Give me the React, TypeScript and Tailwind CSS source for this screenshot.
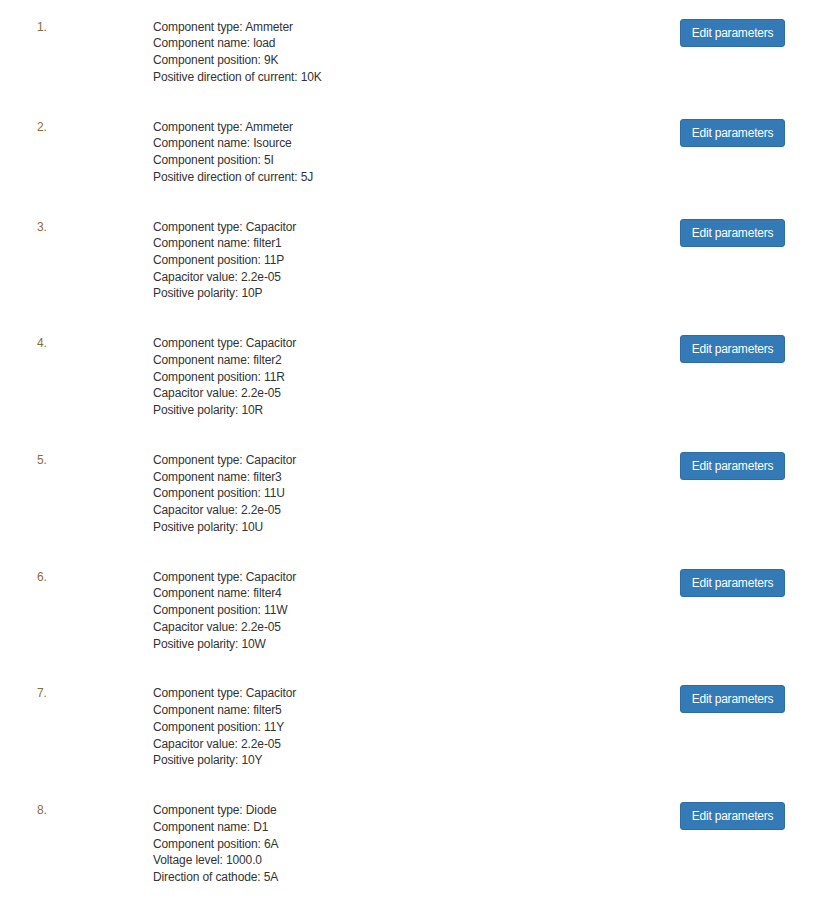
import React from "react";

const items: string[][] = [
  ["Component type: Ammeter", "Component name: load", "Component position: 9K", "Positive direction of current: 10K"],
  ["Component type: Ammeter", "Component name: Isource", "Component position: 5I", "Positive direction of current: 5J"],
  ["Component type: Capacitor", "Component name: filter1", "Component position: 11P", "Capacitor value: 2.2e-05", "Positive polarity: 10P"],
  ["Component type: Capacitor", "Component name: filter2", "Component position: 11R", "Capacitor value: 2.2e-05", "Positive polarity: 10R"],
  ["Component type: Capacitor", "Component name: filter3", "Component position: 11U", "Capacitor value: 2.2e-05", "Positive polarity: 10U"],
  ["Component type: Capacitor", "Component name: filter4", "Component position: 11W", "Capacitor value: 2.2e-05", "Positive polarity: 10W"],
  ["Component type: Capacitor", "Component name: filter5", "Component position: 11Y", "Capacitor value: 2.2e-05", "Positive polarity: 10Y"],
  ["Component type: Diode", "Component name: D1", "Component position: 6A", "Voltage level: 1000.0", "Direction of cathode: 5A"],
];

export default function App() {
  return (
    <div
      className="bg-white min-h-[911px] pt-[2px] text-[12px] leading-[16.7px] tracking-[-0.12px] text-[#333333]"
      style={{ fontFamily: '"Liberation Sans", Arial, sans-serif' }}
    >
      {items.map((lines, i) => (
        <div key={i} className="flex items-start py-[16.6px] pl-[37px] pr-[32px]">
          <div className="w-[116px] text-[#8a6d3b]">{i + 1}.</div>
          <div className="flex-1">
            {lines.map((l, j) => (
              <div key={j}>{l}</div>
            ))}
          </div>
          <button className="h-[28px] w-[105px] rounded-[3px] border border-[#2e6da4] bg-[#337ab7] text-white text-[12px] leading-[18px] tracking-[-0.2px]">
            Edit parameters
          </button>
        </div>
      ))}
    </div>
  );
}
